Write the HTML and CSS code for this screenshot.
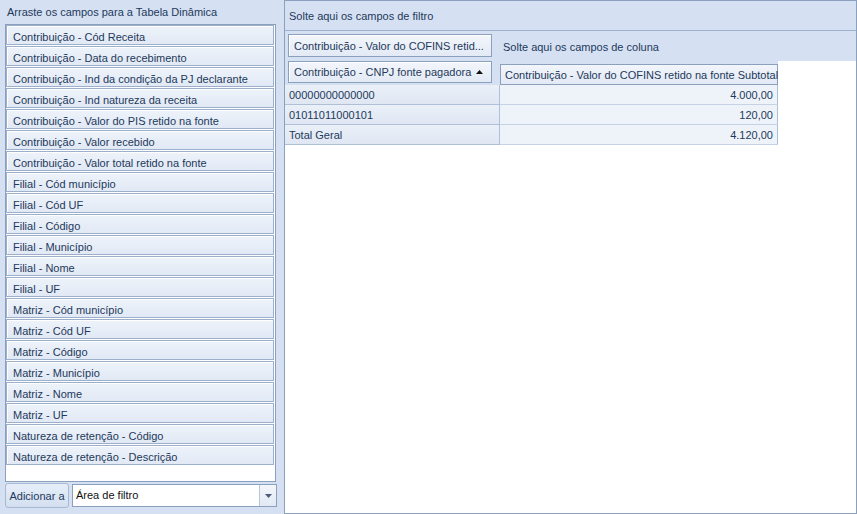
FILE: index.html
```html
<!DOCTYPE html>
<html lang="pt">
<head>
    <meta charset="UTF-8">
    <title>Tabela Dinâmica</title>
    <link rel="stylesheet" href="styles.css">
</head>
<body>
    <div class="app">
        <!-- Field list -->
        <aside class="field-panel">
            <div class="panel-title">Arraste os campos para a Tabela Dinâmica</div>
            <ul class="field-list">
                <li class="field-item">Contribuição - Cód Receita</li>
                <li class="field-item">Contribuição - Data do recebimento</li>
                <li class="field-item">Contribuição - Ind da condição da PJ declarante</li>
                <li class="field-item">Contribuição - Ind natureza da receita</li>
                <li class="field-item">Contribuição - Valor do PIS retido na fonte</li>
                <li class="field-item">Contribuição - Valor recebido</li>
                <li class="field-item">Contribuição - Valor total retido na fonte</li>
                <li class="field-item">Filial - Cód município</li>
                <li class="field-item">Filial - Cód UF</li>
                <li class="field-item">Filial - Código</li>
                <li class="field-item">Filial - Município</li>
                <li class="field-item">Filial - Nome</li>
                <li class="field-item">Filial - UF</li>
                <li class="field-item">Matriz - Cód município</li>
                <li class="field-item">Matriz - Cód UF</li>
                <li class="field-item">Matriz - Código</li>
                <li class="field-item">Matriz - Município</li>
                <li class="field-item">Matriz - Nome</li>
                <li class="field-item">Matriz - UF</li>
                <li class="field-item">Natureza de retenção - Código</li>
                <li class="field-item">Natureza de retenção - Descrição</li>
            </ul>
            <div class="add-bar">
                <button class="add-button">Adicionar a</button>
                <div class="area-select">
                    <span class="area-value">Área de filtro</span>
                    <span class="select-arrow">
                        <svg width="7" height="4" viewBox="0 0 7 4"><path d="M0 0h7L3.5 4z" fill="#4b5d78"/></svg>
                    </span>
                </div>
            </div>
        </aside>

        <!-- Pivot grid -->
        <main class="pivot">
            <div class="filter-area">Solte aqui os campos de filtro</div>
            <div class="pivot-grid">
                <div class="band-cell">
                    <div class="field-button data-field">Contribuição - Valor do COFINS retid...</div>
                </div>
                <div class="band-cell column-drop">Solte aqui os campos de coluna</div>
                <div class="band-cell"></div>

                <div class="band-cell">
                    <div class="field-button row-field">
                        <span>Contribuição - CNPJ fonte pagadora</span>
                        <svg class="sort-arrow" width="7" height="4" viewBox="0 0 7 4"><path d="M3.5 0L7 4H0z" fill="#111"/></svg>
                    </div>
                </div>
                <div class="band-cell header-wrap">
                    <div class="column-header">Contribuição - Valor do COFINS retido na fonte Subtotal</div>
                </div>
                <div class="empty-cell"></div>

                <div class="row-header">00000000000000</div>
                <div class="data-cell">4.000,00</div>
                <div class="empty-cell"></div>

                <div class="row-header">01011011000101</div>
                <div class="data-cell">120,00</div>
                <div class="empty-cell"></div>

                <div class="row-header">Total Geral</div>
                <div class="data-cell">4.120,00</div>
                <div class="empty-cell"></div>

                <div class="empty-cell fill"></div>
            </div>
        </main>
    </div>
</body>
</html>
```

FILE: styles.css
```css
/* Reset */
body, ul, li {
    margin: 0;
    padding: 0;
}

body {
    font-family: "Liberation Sans", Arial, sans-serif;
    font-size: 11px;
    color: #1e395b;
    background-color: #d5e1f2;
}

.app {
    display: flex;
    width: 857px;
    height: 514px;
}

/* Field list panel */
.field-panel {
    width: 284px;
    display: flex;
    flex-direction: column;
}

.panel-title {
    height: 24px;
    line-height: 24px;
    padding-left: 7px;
}

.field-list {
    list-style: none;
    margin-left: 5px;
    width: 269px;
    height: 456px;
    background-color: #fff;
    border: 1px solid #8ba0bc;
}

.field-item {
    height: 16px;
    line-height: 18px;
    padding: 2px 0 0 6px;
    margin: 0 1px 1px 0;
    border: 1px solid #9cb0cc;
    box-shadow: inset 1px 1px 0 #fff;
    background: linear-gradient(#eef3fa, #e1e9f5);
    white-space: nowrap;
}

.add-bar {
    display: flex;
    align-items: center;
    gap: 3px;
    margin: 1px 0 0 5px;
}

.add-button {
    width: 64px;
    height: 25px;
    padding: 0;
    font-family: inherit;
    font-size: 11px;
    color: #1e395b;
    border: 1px solid #a7b9d3;
    border-radius: 3px;
    background: linear-gradient(#e6eef9, #d3dff0);
}

.area-select {
    display: flex;
    width: 203px;
    height: 21px;
    background-color: #fff;
    border: 1px solid #8ba0bc;
}

.area-value {
    flex: 1;
    line-height: 21px;
    padding-left: 3px;
    color: #111;
}

.select-arrow {
    width: 16px;
    display: flex;
    align-items: center;
    justify-content: center;
    border-left: 1px solid #b6c6dc;
    background: linear-gradient(#f3f6fb, #e2e9f4);
}

/* Pivot area */
.pivot {
    width: 571px;
    height: 512px;
    border: 1px solid #8ba0bc;
    background-color: #fff;
    display: flex;
    flex-direction: column;
}

.filter-area {
    height: 29px;
    line-height: 30px;
    padding-left: 4px;
    background-color: #d5e1f2;
    border-bottom: 1px solid #9fb2cd;
}

.pivot-grid {
    flex: 1;
    display: grid;
    grid-template-columns: 215px 278px 1fr;
    grid-template-rows: 30px 24px 20px 20px 20px 1fr;
}

.band-cell {
    background-color: #d5e1f2;
}

.column-drop {
    line-height: 32px;
    padding-left: 3px;
    white-space: nowrap;
}

.field-button {
    margin-left: 3px;
    width: 197px;
    padding-left: 5px;
    border: 1px solid #8ba0bc;
    box-shadow: inset 1px 1px 0 #fff;
    background: linear-gradient(#f3f6fb, #e3eaf5);
    white-space: nowrap;
}

.data-field {
    margin-top: 3px;
    height: 21px;
    line-height: 22px;
}

.row-field {
    height: 20px;
    line-height: 20px;
    display: flex;
    align-items: center;
}

.sort-arrow {
    margin-left: 5px;
}

.header-wrap {
    padding-top: 3px;
}

.column-header {
    height: 19px;
    line-height: 20px;
    padding-left: 4px;
    border: 1px solid #8ba0bc;
    background: linear-gradient(#f2f6fb, #e2e9f5);
    white-space: nowrap;
}

.row-header {
    padding: 1px 0 0 4px;
    line-height: 19px;
    border-right: 1px solid #aebfd7;
    border-bottom: 1px solid #aebfd7;
    background: linear-gradient(#ebf0f8, #dfe7f3);
}

.data-cell {
    text-align: right;
    padding: 1px 4px 0 0;
    line-height: 19px;
    border-right: 1px solid #aebfd7;
    border-bottom: 1px solid #c6d3e5;
    background-color: #eef3fa;
}

.row-header, .data-cell {
    height: 18px;
}

.fill {
    grid-column: 1 / -1;
}
```
